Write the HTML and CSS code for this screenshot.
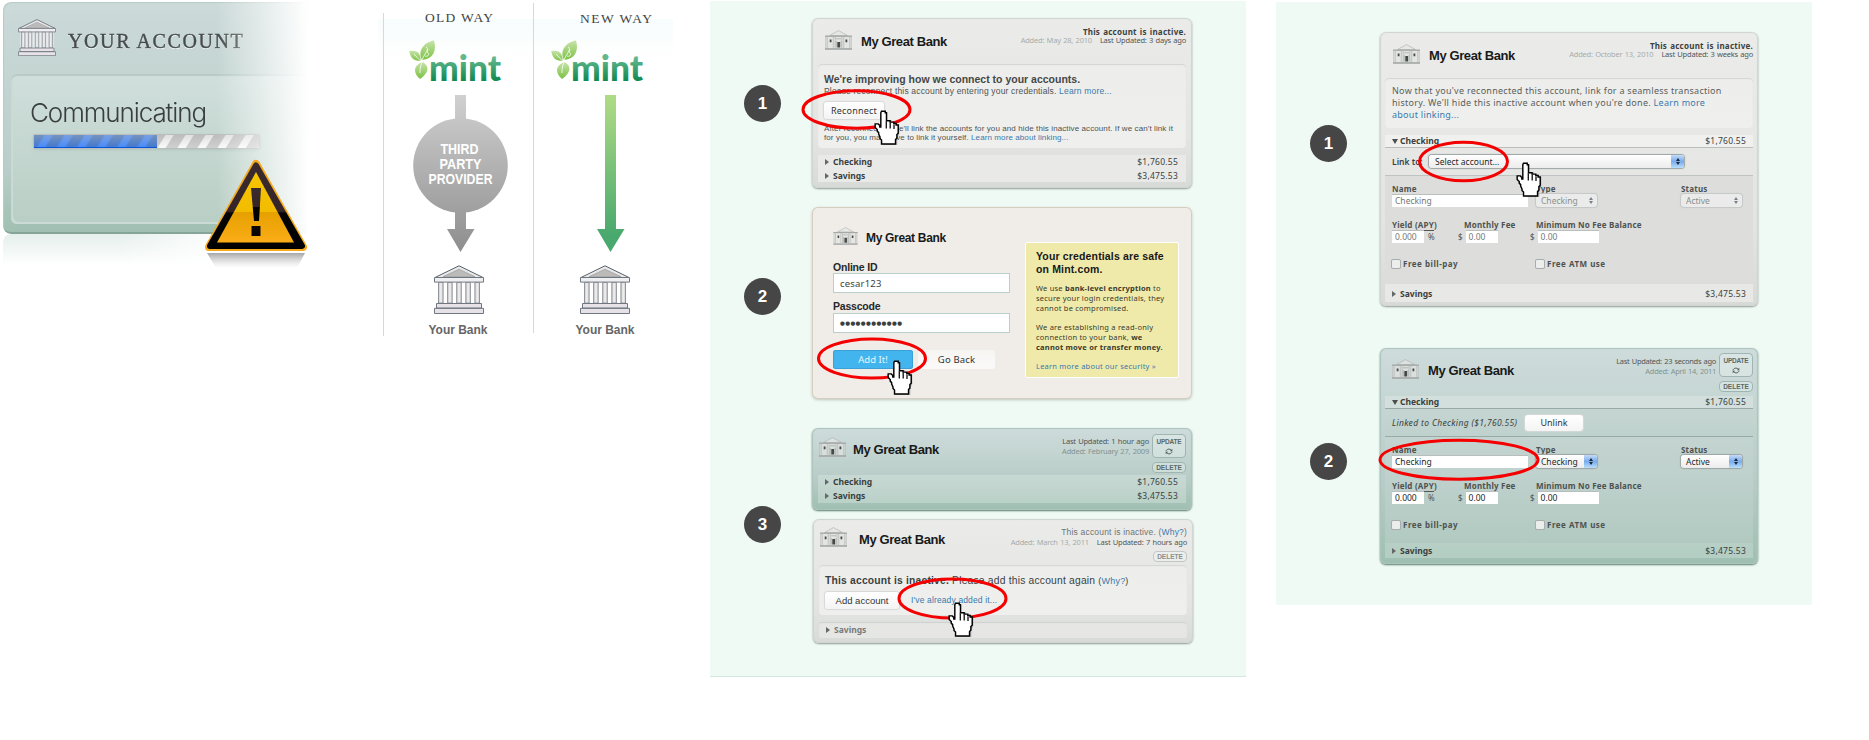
FILE: index.html
```html
<!DOCTYPE html>
<html lang="en">
<head>
<meta charset="utf-8">
<title>Account connection illustrations</title>
<link rel="stylesheet" href="styles.css">
</head>
<body>
<svg class="defs" width="0" height="0" aria-hidden="true">
  <defs>
    <linearGradient id="stone" x1="0" x2="1" y1="0" y2="0"><stop offset="0" stop-color="#c9c9c9"/><stop offset=".5" stop-color="#f3f1f3"/><stop offset="1" stop-color="#cfcdcf"/></linearGradient>
    <linearGradient id="mintText" x1="0" x2="0" y1="0" y2="1"><stop offset=".3" stop-color="#62b78d"/><stop offset=".8" stop-color="#128a50"/></linearGradient>
    <linearGradient id="leaf" x1="0" x2="0" y1="0" y2="1"><stop offset="0" stop-color="#c7e4ab"/><stop offset="1" stop-color="#7cc142"/></linearGradient>
    <linearGradient id="titleWash" x1="0" x2="0" y1="0" y2="1"><stop offset="0" stop-color="#f7fcfc"/><stop offset="1" stop-color="#fff"/></linearGradient>
    <linearGradient id="grayFlow" gradientUnits="userSpaceOnUse" x1="0" x2="0" y1="95" y2="252"><stop offset="0" stop-color="#d0d0d0"/><stop offset="1" stop-color="#8e8e8e"/></linearGradient>
    <linearGradient id="greenFlow" gradientUnits="userSpaceOnUse" x1="0" x2="0" y1="95" y2="252"><stop offset="0" stop-color="#aedc85"/><stop offset=".1" stop-color="#a6d684"/><stop offset=".9" stop-color="#48a86d"/><stop offset="1" stop-color="#48a86d"/></linearGradient>
    <symbol id="temple" viewBox="0 0 50 49">
      <path d="M1 12.500 25 .8 49 12.500Z" fill="#e9e9ea" stroke="#566069" stroke-width="1"/>
      <path d="M9 11.700 25 4.200 41 11.700Z" fill="#bdbbb9" stroke="#8b8f94" stroke-width=".6"/>
      <path d="M3 17h44v21H3z" fill="#fff" opacity=".55"/>
      <path d="M.5 12.500h49v4.600H.5z" fill="#efeef0" stroke="#6f7780" stroke-width="1"/>
      <g fill="url(#stone)" stroke="#7a8087" stroke-width=".8"><path d="M4.500 17.500h4.600v20.600H4.500z"/><path d="M13.600 17.500h4.600v20.600h-4.600z"/><path d="M22.700 17.500h4.600v20.600h-4.600z"/><path d="M31.800 17.500h4.600v20.600h-4.600z"/><path d="M40.900 17.500h4.600v20.600h-4.600z"/></g>
      <path d="M2.500 38.500h45v4.600h-45zM.5 43.300h49v5.200H.5z" fill="#e6e2e7" stroke="#6f7780" stroke-width="1"/>
    </symbol>
    <symbol id="house" viewBox="0 0 27 20">
      <path d="M4.500 5.500 13.500.6 22.500 5.500Z" fill="#e4e6e4" fill-opacity=".7" stroke="#a9adab" stroke-width=".6"/>
      <path d="M.7 6.500h25.600v12.300H.7z" fill="#e0e2e0" fill-opacity=".7" stroke="#b0b4b2" stroke-width=".6"/>
      <path d="M0 5.500h27v1.200H0zM0 18.300h27v1.500H0z" fill="#a3a7a5"/>
      <path d="M2.200 7v11M8.300 7v11M10.200 6v12M16.900 6v12M18.700 7v11M24.800 7v11" stroke="#b0b3b1" stroke-width=".7"/>
      <path d="M4.700 9.500h1.800v2.800H4.700zM12.300 12h2.800v5.500h-2.800zM20.500 9.500h1.800v2.800h-1.800z" fill="#454948"/>
      <path d="M11 8.800h5.200M11.300 11v6.500M16 11v6.500" stroke="#979b99" stroke-width=".6"/>
    </symbol>
    <symbol id="hand" viewBox="0 0 25 34">
      <path transform="translate(1.500 2)" d="M8 1h3.500v11h1.500V8h3v5h1.500v-3h2.500v4h1v-2h2v9l-2 5v6H7v-5L4 22 1 17l-1-3h3l3 4h1V3z" fill="#555" opacity=".35"/>
      <path d="M7.200 1.200h3.600v1.500h1.200v7.800h3.500v1.300h3.600v1.300h2.300v1.400h2v8l-1.300 1.300v3.500l-1.300 1.300v4.500H7.200v-4l-1.500-1.500v-1.500L4.400 23.500v-1.500L3 20.500V19l-2-2v-3.500h3l1.500 1.500v1.500h1V2.700z" fill="#fff" stroke="#000" stroke-width="1.400"/>
      <path d="M11.800 11v7M15.600 12.500v5.500M19.300 14v4.500" stroke="#000" stroke-width="1.200"/>
    </symbol>
    <symbol id="mint" viewBox="0 0 92 44">
      <g fill="url(#leaf)">
        <path d="M13 20C8 11 15 2 25 .5 28 11 24 19 13 20Z"/>
        <path d="M11.500 21C4 21 1 17 .3 11 8 10 12 13 11.500 21Z"/>
        <path d="M13 22c7 3 8 10-2 17-7-6-7-13 2-17Z"/>
      </g>
      <path d="M13 20c2-5 4-7 6-11M11.500 21 5 14M13 22c-2 5-2 8-2 11M17 7c3 1 0 4 2 6s-1 4-3 3" stroke="#fff" stroke-width=".8" fill="none"/>
      <text class="mint-word" x="20" y="41" textLength="72" lengthAdjust="spacingAndGlyphs" fill="url(#mintText)">mint</text>
    </symbol>
    <symbol id="sync" viewBox="0 0 8 7"><path d="M1 3.200C1.500 1 4.800 .4 6.300 2.200M7 3.800C6.500 6 3.200 6.600 1.700 4.800" fill="none" stroke="#4d5755" stroke-width="1"/><path d="M7.300.8v2.400H4.900zM.7 6.200V3.800h2.400z" fill="#4d5755"/></symbol>
  </defs>
</svg>

<main class="page">
  <section class="status">
    <div class="status-card">
      <div class="status-head">
        <svg class="status-temple"><use href="#temple"/></svg>
        <h2>YOUR ACCOUNT</h2>
      </div>
      <div class="status-body">
        <p>Communicating</p>
        <div class="progress"><div class="progress-done"></div></div>
      </div>
    </div>
    <div class="status-mirror"></div>
    <svg class="warning" viewBox="0 0 104 112">
      <defs>
        <linearGradient id="amber" x1="0" x2="0" y1="0" y2="1"><stop offset="0" stop-color="#f8c600"/><stop offset=".56" stop-color="#f2bc00"/><stop offset=".57" stop-color="#e6a000"/><stop offset="1" stop-color="#fbad17"/></linearGradient>
        <linearGradient id="tar" x1="0" x2="0" y1="0" y2="1"><stop offset="0" stop-color="#3a2b2e"/><stop offset=".57" stop-color="#352428"/><stop offset=".59" stop-color="#050505"/><stop offset="1" stop-color="#000"/></linearGradient>
        <linearGradient id="shade" x1="0" x2="0" y1="0" y2="1"><stop offset="0" stop-color="#777" stop-opacity=".65"/><stop offset="1" stop-color="#bbb" stop-opacity="0"/></linearGradient>
      </defs>
      <path d="M3 94h98l-8 15H12z" fill="url(#shade)"/>
      <path d="M52 5 99 88H5Z" fill="#f6a91c" stroke="#f6a91c" stroke-width="8" stroke-linejoin="round"/>
      <path d="M52 6.500 98 87H6Z" fill="url(#tar)" stroke="url(#tar)" stroke-width="6" stroke-linejoin="round"/>
      <path d="M52 13 90 83.500H13Z" fill="url(#amber)"/>
      <path d="M47 29h10l-2 33h-5z" fill="url(#tar)"/><path d="M47.500 67h9v10h-9z" fill="#0b0707"/>
    </svg>
  </section>

  <svg class="routes" width="310" height="345" viewBox="370 0 310 345">
    <path d="M378 19h295v38H378z" fill="url(#titleWash)"/>
    <path d="M383.500 13v323M533.500 3v330" stroke="#d5dad9"/>
    <g class="route-title"><text x="425" y="22" textLength="68">OLD WAY</text><text x="580" y="23" textLength="72">NEW WAY</text></g>
    <use href="#mint" x="409" y="40" width="92" height="44"/><use href="#mint" x="551" y="40" width="92" height="44"/>
    <path d="M455 95h11v134h8.500L460.500 252 447 229h8z" fill="url(#grayFlow)"/>
    <circle cx="460.500" cy="165.500" r="47.300" fill="url(#grayFlow)"/>
    <g class="provider"><text x="440.500" y="154" textLength="38" lengthAdjust="spacingAndGlyphs">THIRD</text><text x="439.500" y="169" textLength="42" lengthAdjust="spacingAndGlyphs">PARTY</text><text x="428.500" y="184" textLength="64" lengthAdjust="spacingAndGlyphs">PROVIDER</text></g>
    <path d="M605 95h11v134h8.500L610.500 252 597 229h8z" fill="url(#greenFlow)"/>
    <use href="#temple" x="434" y="265" width="50" height="49"/><use href="#temple" x="580" y="265" width="50" height="49"/>
    <g class="bank-label"><text x="428.500" y="334" textLength="59">Your Bank</text><text x="575.500" y="334" textLength="59">Your Bank</text></g>
  </svg>

  <section class="panel panel-connect">
    <div class="step step-1">
      <div class="badge">1</div>
      <article class="card gray reconnect">
        <header><svg class="house"><use href="#house"/></svg><h3>My Great Bank</h3>
          <div class="meta"><b>This account is inactive.</b><span><i>Added: May 28, 2010</i><em>Last Updated: 3 days ago</em></span></div></header>
        <div class="notice">
          <h4>We're improving how we connect to your accounts.</h4>
          <p class="lead">Please reconnect this account by entering your credentials. <a>Learn more...</a></p>
          <button class="btn">Reconnect</button>
          <p class="fine"><span>After reconnecting we'll link the accounts for you and hide this inactive account. If we can't link it</span><br>for you, you may have to link it yourself. <a>Learn more about linking...</a></p>
        </div>
        <ul class="rows"><li><s></s><b>Checking</b><span>$1,760.55</span></li><li><s></s><b>Savings</b><span>$3,475.53</span></li></ul>
      </article>
    </div>

    <div class="step step-2">
      <div class="badge">2</div>
      <article class="card cream">
        <div class="login">
          <div class="brand"><svg class="house"><use href="#house"/></svg><h3>My Great Bank</h3></div>
          <label class="lbl-id">Online ID</label><div class="field">cesar123</div>
          <label class="lbl-pass">Passcode</label><div class="field dots">●●●●●●●●●●●●</div>
          <div class="actions"><button class="btn blue">Add It!</button><button class="btn back">Go Back</button></div>
        </div>
        <aside class="safe">
          <h4>Your credentials are safe<br>on Mint.com.</h4>
          <p>We use <b>bank-level encryption</b> to<br>secure your login credentials, they<br>cannot be compromised.</p>
          <p>We are establishing a read-only<br>connection to your bank, <b>we<br>cannot move or transfer money.</b></p>
          <p><a>Learn more about our security »</a></p>
        </aside>
      </article>
    </div>

    <div class="step step-3">
      <div class="badge">3</div>
      <div class="stack">
        <article class="card green compact">
          <header><svg class="house"><use href="#house"/></svg><h3>My Great Bank</h3>
            <div class="meta"><em>Last Updated: 1 hour ago</em><i>Added: February 27, 2009</i></div>
            <div class="tools"><div class="update">UPDATE<svg><use href="#sync"/></svg></div><div class="delete">DELETE</div></div></header>
          <ul class="rows"><li><s></s><b>Checking</b><span>$1,760.55</span></li><li><s></s><b>Savings</b><span>$3,475.53</span></li></ul>
        </article>
        <article class="card gray again">
          <header><svg class="house"><use href="#house"/></svg><h3>My Great Bank</h3>
            <div class="meta"><strong>This account is inactive. (<a>Why?</a>)</strong><span><i>Added: March 13, 2011</i><em>Last Updated: 7 hours ago</em></span><div class="delete">DELETE</div></div></header>
          <div class="notice">
            <p class="lead"><b>This account is inactive.</b> Please add this account again <small>(<a>Why?</a>)</small></p>
            <div class="choice"><button class="btn">Add account</button><a>I've already added it...</a></div>
          </div>
          <ul class="rows"><li><s></s><b>Savings</b></li></ul>
        </article>
      </div>
    </div>

    <svg class="marks" width="536" height="675" viewBox="710 1 536 675">
      <ellipse cx="856.500" cy="109.500" rx="53.500" ry="18.700"/><ellipse cx="872" cy="358.500" rx="53.500" ry="19.500"/><ellipse cx="952.500" cy="598.500" rx="53.500" ry="19.500"/>
      <use href="#hand" x="874" y="110" width="26" height="35"/><use href="#hand" x="887" y="360" width="26" height="35"/><use href="#hand" x="948" y="602" width="26" height="35"/>
    </svg>
  </section>

  <section class="panel panel-link">
    <div class="step step-1">
      <div class="badge">1</div>
      <article class="card gray detail">
        <header><svg class="house"><use href="#house"/></svg><h3>My Great Bank</h3>
          <div class="meta"><b>This account is inactive.</b><span><i>Added: October 13, 2010</i><em>Last Updated: 3 weeks ago</em></span></div></header>
        <div class="notice">Now that you've reconnected this account, link for a seamless transaction<br>history. We'll hide this inactive account when you're done. <a>Learn more<br>about linking...</a></div>
        <ul class="rows open"><li><s class="down"></s><b>Checking</b><span>$1,760.55</span></li></ul>
        <div class="linkbar"><b>Link to:</b><div class="select wide">Select account...<u></u></div></div>
        <div class="form muted">
          <div class="line names"><div><label>Name</label><div class="input">Checking</div></div><div><label>Type</label><div class="select">Checking<u></u></div></div><div><label>Status</label><div class="select">Active<u></u></div></div></div>
          <div class="line fees"><div><label>Yield (<ins>APY</ins>)</label><div class="money"><div class="input">0.000</div><span>%</span></div></div><div><label>Monthly Fee</label><div class="money"><span>$</span><div class="input">0.00</div></div></div><div><label>Minimum No Fee Balance</label><div class="money"><span>$</span><div class="input">0.00</div></div></div></div>
          <div class="line checks"><label><q></q>Free bill-pay</label><label><q></q>Free ATM use</label></div>
        </div>
        <ul class="rows last"><li><s></s><b>Savings</b><span>$3,475.53</span></li></ul>
      </article>
    </div>

    <div class="step step-2">
      <div class="badge">2</div>
      <article class="card green detail linked">
        <header><svg class="house"><use href="#house"/></svg><h3>My Great Bank</h3>
          <div class="meta"><em>Last Updated: 23 seconds ago</em><i>Added: April 14, 2011</i></div>
          <div class="tools"><div class="update">UPDATE<svg><use href="#sync"/></svg></div><div class="delete">DELETE</div></div></header>
        <ul class="rows open"><li><s class="down"></s><b>Checking</b><span>$1,760.55</span></li></ul>
        <div class="linkbar"><i>Linked to Checking ($1,760.55)</i><button class="btn">Unlink</button></div>
        <div class="form">
          <div class="line names"><div><label>Name</label><div class="input">Checking</div></div><div><label>Type</label><div class="select">Checking<u></u></div></div><div><label>Status</label><div class="select">Active<u></u></div></div></div>
          <div class="line fees"><div><label>Yield (<ins>APY</ins>)</label><div class="money"><div class="input">0.000</div><span>%</span></div></div><div><label>Monthly Fee</label><div class="money"><span>$</span><div class="input">0.00</div></div></div><div><label>Minimum No Fee Balance</label><div class="money"><span>$</span><div class="input">0.00</div></div></div></div>
          <div class="line checks"><label><q></q>Free bill-pay</label><label><q></q>Free ATM use</label></div>
        </div>
        <ul class="rows last"><li><s></s><b>Savings</b><span>$3,475.53</span></li></ul>
      </article>
    </div>

    <svg class="marks" width="536" height="602" viewBox="1276 2 536 602">
      <ellipse cx="1463.500" cy="161.500" rx="44" ry="19.300"/><ellipse cx="1459" cy="459.700" rx="79" ry="19.500"/>
      <use href="#hand" x="1516" y="162" width="26" height="35"/>
    </svg>
  </section>
</main>
</body>
</html>
```

FILE: styles.css
```css
* { box-sizing: border-box; }
body { margin: 0; background: #fff; overflow: hidden; font-family: "Noto Sans", "Open Sans", sans-serif; color: #3b3f3e; }
h2, h3, h4, p, ul { margin: 0; padding: 0; }
ul { list-style: none; }
i, em { font-style: normal; }
s, ins, q { text-decoration: none; }
q::before, q::after { content: none; }
a { color: #3a79ab; }
button { padding: 0; border: 0; font: inherit; color: inherit; }
.defs { position: absolute; }
.page { display: flex; align-items: flex-start; height: 740px; }

/* Account status */
.status { position: relative; width: 370px; padding: 2px 0 0 3px; }
.status-card { width: 306px; height: 232px; padding: 9px 0 0 8px; border-radius: 8px 0 0 8px; border-bottom: 2px solid #84a598; background: linear-gradient(#ccdad9, #b9cec9 72%, #a0c0b2); box-shadow: inset 1px 1px 1px #b6cbc6; -webkit-mask-image: linear-gradient(90deg, #000 70%, transparent); mask-image: linear-gradient(90deg, #000 70%, transparent); }
.status-head { display: flex; gap: 12px; height: 63px; padding: 8px 0 0 7px; }
.status-temple { width: 38px; height: 37px; }
.status-head h2 { padding-top: 10px; font: 20px/24px "Liberation Serif", serif; letter-spacing: 1.6px; color: #454b4c; text-shadow: 0 1px #fff; -webkit-text-stroke: .4px #454b4c; }
.status-body { height: 150px; padding: 22px 0 0 19px; border-radius: 6px 0 0 6px; background: linear-gradient(#d0dfdc, #b9cec4); box-shadow: inset 0 2px 1px #b8cac6, inset 2px -2px 1px #cbdcd6; }
.status-body p { font: 300 26px/34px Inter, sans-serif; letter-spacing: -1.1px; color: #393e3f; }
.progress { width: 227px; height: 15px; margin: 4px 0 0 3px; border: 1px solid #b9bdbd; border-radius: 2px; background: linear-gradient(rgba(120,120,120,.2), rgba(255,255,255,0)), repeating-linear-gradient(122deg, #cfcfcf 0 9px, #fafafa 10px 16px, #cfcfcf 17px); box-shadow: 0 1px 3px #b0c3bd; }
.progress-done { width: 123px; height: 13px; background: linear-gradient(rgba(150,165,190,.45), rgba(20,100,240,.3)), repeating-linear-gradient(122deg, #5a83bf 0 8px, #619dff 10px 15px, #5a83bf 17px); border-bottom: 1px solid #0758d8; }
.status-mirror { width: 230px; height: 32px; border-radius: 8px 0 0; background: linear-gradient(#e5efec, #fff); -webkit-mask-image: linear-gradient(90deg, #000 50%, transparent); mask-image: linear-gradient(90deg, #000 50%, transparent); }
.warning { position: absolute; left: 204px; top: 159px; width: 104px; height: 112px; }

/* Routes diagram */
.routes { flex: none; margin-right: 30px; }
.mint-word { font: 900 36px Lato, sans-serif; }
.route-title { font: 13.500px "Liberation Serif", serif; fill: #444; }
.provider { font: bold 15.500px "Liberation Sans", sans-serif; fill: #fff; }
.bank-label { font: bold 12px "Liberation Sans", sans-serif; fill: #666; }

/* Instruction panels */
.panel { position: relative; flex: none; width: 536px; background: #f0faf5; }
.panel-connect { height: 676px; margin: 1px 30px 0 0; padding: 17px 0 0 34px; border-bottom: 1px solid #d5e6dd; }
.panel-link { height: 603px; margin-top: 2px; padding: 30px 0 0 34px; }
.marks { position: absolute; left: 0; top: 0; }
.marks ellipse { fill: none; stroke: #f40000; stroke-width: 3; }
.step { display: flex; align-items: flex-start; gap: 31px; }
.panel-link .step { gap: 33px; }
.badge { width: 37px; height: 37px; border-radius: 50%; background: #464646; color: #fff; font: bold 17px/37px "Liberation Sans", sans-serif; text-align: center; }
.panel-connect .step-1 .badge { margin-top: 67px; }
.panel-connect .step-2 .badge { margin-top: 71px; }
.panel-connect .step-3 .badge { margin-top: 78px; }
.panel-link .step-1 .badge { margin-top: 93px; }
.panel-link .step-2 .badge { margin-top: 95px; }
.panel-connect .step-2 { margin-top: 19px; }
.panel-connect .step-3 { margin-top: 29px; }
.panel-link .step-2 { margin-top: 42px; }

/* Cards */
.card { width: 380px; border-radius: 6px; padding: 0 6px; }
.gray { background: linear-gradient(#ebecea, #e4e5e3 70%, #d8dad8); box-shadow: inset 0 0 1px 1px #d0d4d1, 0 1px 2px #8f9a95; }
.green { background: linear-gradient(#cedcdb, #b9cdc8 60%, #9fbfb2); box-shadow: inset 0 0 1px 1px #adc4bd, 0 1px 2px #567a6c; }
.card header { display: flex; align-items: flex-start; }
.house { flex: none; width: 27px; height: 20px; }
.card h3 { font: bold 13px/16px "Liberation Sans", sans-serif; letter-spacing: -.4px; color: #181a1a; white-space: nowrap; }
.meta { margin-left: auto; display: flex; flex-direction: column; align-items: flex-end; font-size: 7.500px; line-height: 9px; letter-spacing: -.22px; word-spacing: .7px; white-space: nowrap; }
.meta b { font-size: 8px; letter-spacing: .25px; }
.meta span { display: flex; gap: 8px; }
.meta i { color: #a7abaa; }
.green .meta i { color: #829391; }
.meta em { color: #515555; }
.btn { display: block; border-radius: 3px; background: linear-gradient(#fff, #f3f4f3); box-shadow: 0 0 1px 1px #d5d8d6; color: #303433; text-align: center; font-size: 9px; }
.rows li { display: flex; align-items: center; height: 14px; padding: 0 8px 0 7px; font-size: 8.500px; line-height: 12px; }
.rows b { margin-left: 4px; }
.rows span { margin-left: auto; letter-spacing: .25px; }
.rows s { width: 0; height: 0; border: 3px solid transparent; border-left: 4px solid #626867; border-right: 0; }
.rows s.down { border: 3px solid transparent; border-top: 5px solid #4b504f; border-bottom: 0; margin-right: -2px; }
.tools { display: flex; flex-direction: column; align-items: flex-end; margin-left: 3px; }
.update, .delete { border: 1px solid #a0b5b1; border-radius: 4px; background: rgba(240,248,246,.35); font: bold 6.500px/8px "Liberation Sans", sans-serif; letter-spacing: 0; color: #5c6966; text-align: center; }
.update { width: 34px; height: 24px; padding-top: 3px; letter-spacing: -.2px; }
.update svg { display: block; width: 8px; height: 7px; margin: 2px auto 0; }
.delete { width: 34px; height: 11px; margin-top: 4px; line-height: 9.500px; }
.gray .delete { border-color: #c3c6c4; color: #8b8f8d; }

.reconnect { height: 170px; }
.reconnect header { height: 46px; }
.reconnect .house, .detail .house { margin: 12px 9px 0 7px; }
.reconnect h3, .detail h3 { margin-top: 15.500px; }
.reconnect .meta, .detail .meta { margin-top: 9px; }
.notice { border-radius: 4px; background: linear-gradient(#edeeec, #eff0ee); box-shadow: inset 0 1px 1px #d2d5d3; }
.reconnect .notice { height: 84px; padding: 8px 6px 0; font-family: "Liberation Sans", sans-serif; color: #4f5352; white-space: nowrap; }
.reconnect h4 { font-size: 10.500px; line-height: 14px; letter-spacing: 0; color: #444846; }
.reconnect .lead { font-size: 8.500px; line-height: 11px; letter-spacing: .17px; }
.reconnect .btn { width: 60px; height: 17px; margin: 5px 0; font-family: "Noto Sans", sans-serif; letter-spacing: .2px; }
.reconnect .fine { font-size: 8px; line-height: 9px; letter-spacing: .1px; }
.reconnect .rows { margin-top: 7px; background: #e9eae8; }
.reconnect .rows li { height: 13.500px; padding-top: 1px; }

.cream { display: flex; height: 192px; padding: 0 12px 0 21px; background: #f0ede8; box-shadow: inset 0 0 0 1px #d5cdbe, 0 1px 3px #bcc5be; }
.login { width: 177px; }
.brand { display: flex; gap: 8px; height: 54px; padding-top: 20px; }
.brand .house { width: 25px; height: 18px; }
.cream .brand h3 { padding-top: 3px; font-size: 12px; letter-spacing: -.32px; }
.login label { display: block; height: 12px; font: bold 10.500px/12px "Liberation Sans", sans-serif; color: #262928; letter-spacing: -.2px; }
.login .lbl-pass { height: 13px; margin-top: 7px; }
.field { height: 20px; padding-left: 6px; border: 1px solid #b9cfca; background: #fff; font-size: 9.500px; line-height: 19px; letter-spacing: .2px; }
.field.dots { font: 5.500px/18px "DejaVu Sans", sans-serif; letter-spacing: .4px; }
.actions { display: flex; gap: 5px; margin-top: 17px; }
.actions .btn { width: 80px; height: 19px; font-size: 9.500px; }
.actions .blue { background: #43b5ee; color: #e5f6ff; box-shadow: inset 0 0 0 1px #3ca0d6; }
.actions .back { width: 77px; background: linear-gradient(#f6f5f2, #fbfaf9); box-shadow: none; letter-spacing: .15px; }
.safe { width: 154px; height: 136px; margin: 35px 0 0 15px; padding: 7px 0 0 10px; border: 1px solid #fff; border-radius: 2px; background: #f0eaaa; font-size: 7.500px; line-height: 10px; letter-spacing: .22px; color: #393a2d; white-space: nowrap; }
.safe h4 { margin-bottom: 7px; font: bold 10.500px/13px "Liberation Sans", sans-serif; letter-spacing: .15px; color: #171817; }
.safe p { margin-bottom: 9px; }

.stack { display: grid; gap: 8.500px; }
.compact { height: 82px; }
.compact header { height: 47px; }
.compact .house { margin: 9px 7px 0 1px; }
.compact h3 { margin-top: 13.500px; }
.compact .meta { margin-top: 8px; line-height: 10px; }
.compact .tools { margin-top: 6px; }
.compact .rows { background: rgba(225,238,233,.35); }
.compact .rows li { height: 14px; }
.again { margin-left: 1px; height: 124px; }
.again header { height: 46px; }
.again .house { margin: 8px 12px 0 1px; }
.again h3 { margin-top: 13px; }
.again .meta { margin-top: 8px; line-height: 10px; }
.again strong { font: 8.500px/10px "Liberation Sans", sans-serif; color: #707473; letter-spacing: .18px; word-spacing: 0; }
.again .notice { height: 50px; padding: 10px 6px 0; font-family: "Liberation Sans", sans-serif; white-space: nowrap; }
.again .lead { font-size: 10.300px; line-height: 12px; letter-spacing: .2px; }
.again .lead small { font-size: 9px; }
.choice { display: flex; align-items: center; gap: 12px; margin-top: 5px; font-size: 8.500px; letter-spacing: .14px; }
.choice .btn { width: 74px; height: 17px; font-size: 9.500px; }
.again .rows { margin-top: 7px; border-radius: 3px; background: #e6e7e5; box-shadow: inset 0 1px 1px #cdd0ce; }
.again .rows li { height: 16px; }
.again .rows b { color: #767a78; }

/* Linking cards */
.detail { width: 378px; height: 274px; padding: 0 5px; }
.detail header { height: 46px; }
.detail .house { margin-left: 8px; }
.detail .notice { height: 50px; padding: 7px 7px 0; font-size: 9px; line-height: 12px; letter-spacing: .27px; white-space: nowrap; color: #5a5e5d; }
.detail .rows.open { margin-top: 7px; border-bottom: 1px solid #b9bebb; background: #f0f1ef; }
.detail .rows.open li { height: 12px; padding-right: 7px; }
.detail .rows li { padding-right: 7px; }
.linkbar { display: flex; align-items: center; height: 28px; padding-left: 7px; border-bottom: 1px solid #bec2c0; font-size: 8.500px; }
.linkbar b { width: 37px; font-weight: 600; }
.select { position: relative; width: 62px; height: 13px; padding-left: 5px; border-radius: 3px; background: linear-gradient(#fff, #ececec); box-shadow: 0 0 1px 1px #9ba5a3; font-size: 8.500px; line-height: 13px; white-space: nowrap; color: #242726; }
.select.wide { width: 255px; padding-left: 6px; }
.select u { position: absolute; right: 0; top: 0; width: 13px; height: 13px; border-radius: 0 3px 3px 0; background: linear-gradient(#c4dafa, #78acec 50%, #b8defc); }
.select u::before, .select u::after { content: ""; position: absolute; left: 4.500px; border: 2px solid transparent; }
.select u::before { top: 1px; border-bottom: 3px solid #1d2a3b; }
.select u::after { bottom: 1px; border-top: 3px solid #1d2a3b; }
.muted { background: #dddedc; }
.muted .select { background: #eaebea; box-shadow: 0 0 1px 1px #c4c7c5; color: #8b8f8d; }
.muted .select u { background: none; opacity: .55; }
.muted .input { color: #747877; }
.form { height: 107px; padding: 8px 7px 0; font-size: 8px; color: #4e5251; }
.form label { display: block; height: 9px; font-weight: bold; line-height: 9px; letter-spacing: .2px; white-space: nowrap; }
.form ins { border-bottom: 1px solid #555; }
.line { display: grid; }
.names { grid-template-columns: 144px 145px 62px; }
.names .input { width: 136px; }
.names .input, .names .select { margin-top: 1px; }
.names .select { width: 61px; }
.input { height: 13px; padding-left: 3px; background: #fff; box-shadow: inset 0 1px #b9bfbc; font-size: 8.500px; line-height: 13px; color: #222625; }
.fees { grid-template-columns: 72px 72px 110px; margin-top: 13px; }
.money { display: flex; gap: 4px; margin-top: 1px; line-height: 13px; }
.fees .input { width: 32px; }
.fees > :nth-child(n+2) .money { margin-left: -6px; gap: 3px; }
.fees > :nth-child(3) .input { width: 61px; }
.checks { grid-template-columns: 144px 1fr; margin-top: 16px; }
.checks label { display: flex; gap: 3px; align-items: center; letter-spacing: .5px; }
.checks q { width: 8px; height: 8px; border-radius: 1px; background: #eceeed; box-shadow: 0 0 0 1px #a7adab; }
.detail .rows.last { margin-top: 1px; background: #e8e9e7; }
.detail .rows.last li { height: 18px; padding-top: 1px; }
.linked { height: 216px; }
.linked header { height: 48px; }
.linked .house { margin: 11px 9px 0 7px; }
.linked h3 { margin-top: 14.500px; }
.linked .tools { margin-top: 5px; }
.detail.linked .meta { margin-top: 8px; line-height: 10px; letter-spacing: -.3px; }
.linked .delete { margin-top: 4px; }
.detail.linked .rows.open { margin-top: 0; background: #d2dfdc; border-color: #98aaa6; }
.linked .linkbar { border-color: #98aaa6; }
.linked .linkbar i { width: 133px; font-style: italic; font-size: 8.500px; letter-spacing: .35px; white-space: nowrap; }
.linked .linkbar .btn { width: 58px; height: 16px; }
.linked .form { height: 106px; padding-top: 8px; background: rgba(205,218,214,.3); }
.detail.linked .rows.last { margin-top: 0; background: rgba(225,238,233,.3); }
.detail.linked .rows.last li { height: 15px; padding-top: 0; }
```
